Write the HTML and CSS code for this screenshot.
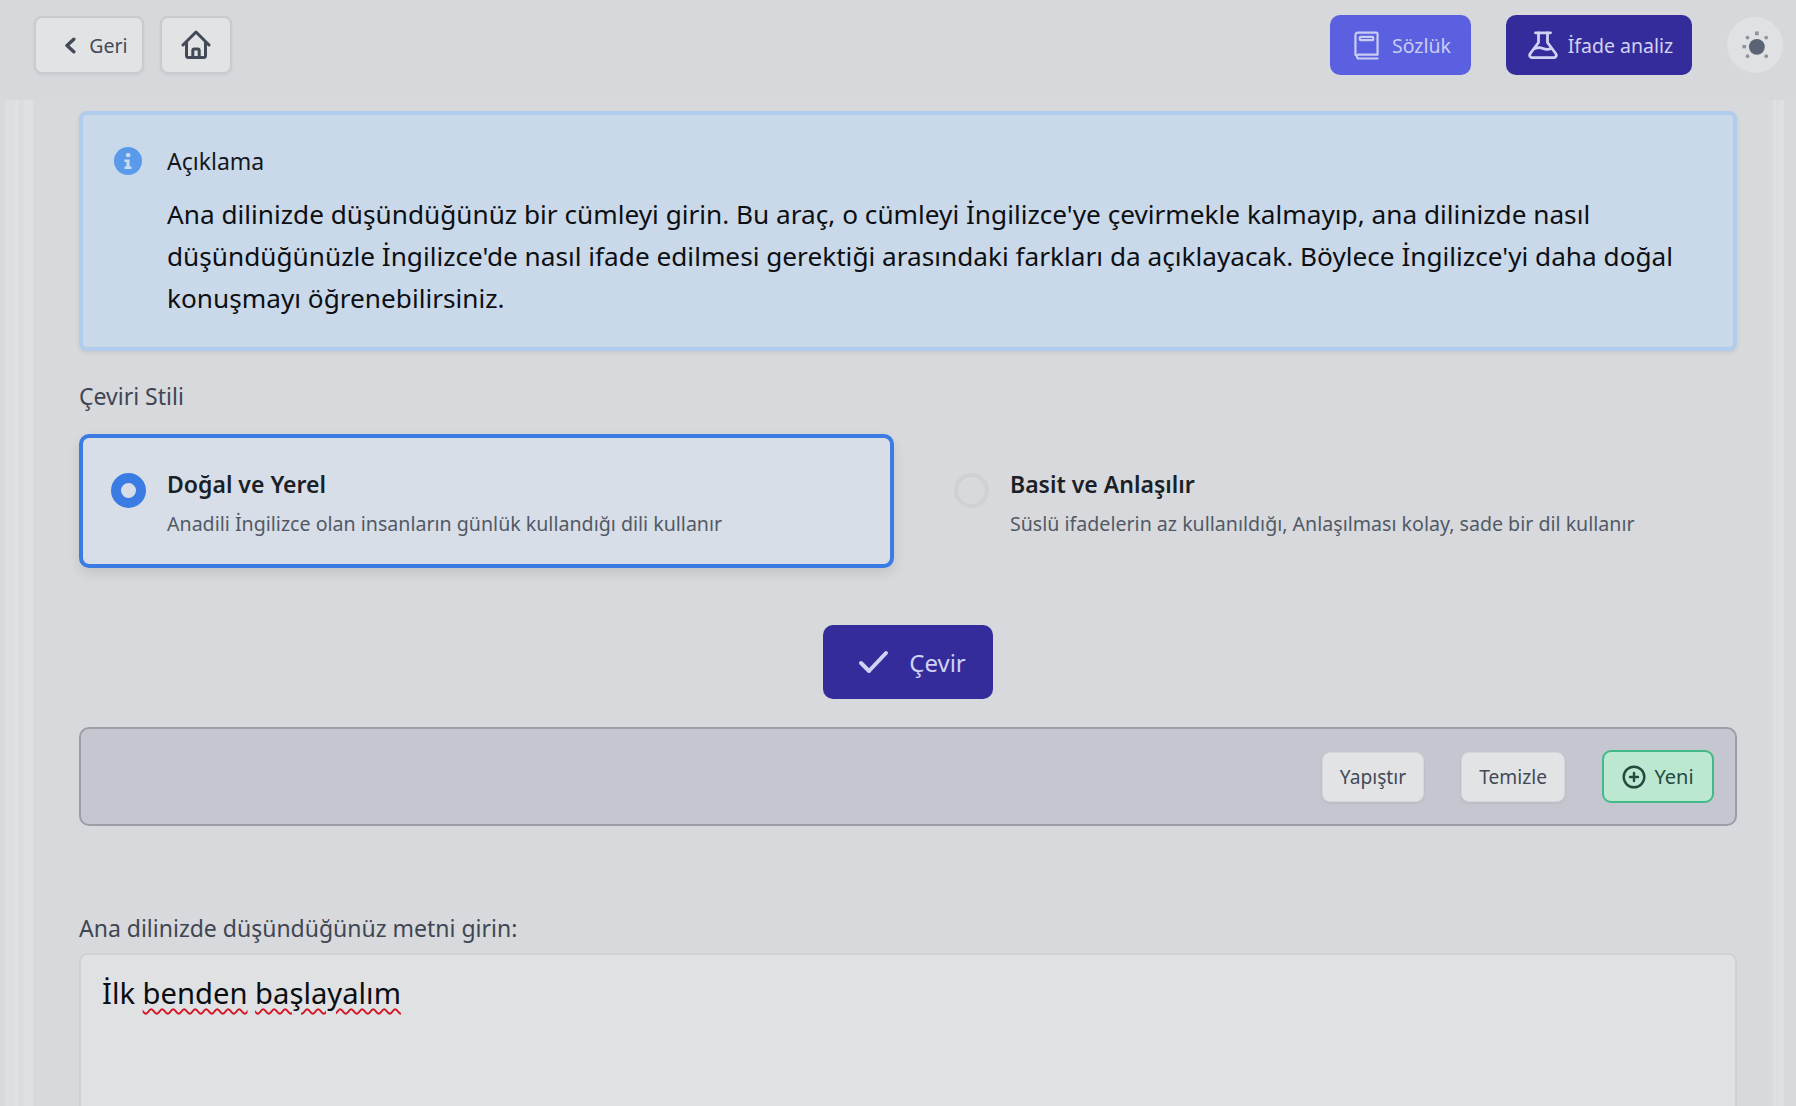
FILE: index.html
```html
<!DOCTYPE html>
<html lang="tr">
<head>
<meta charset="utf-8">
<title>Çeviri</title>
<link rel="stylesheet" href="styles.css">
</head>
<body>
<header class="topbar">
  <div class="group left">
    <button class="btn-light back">
      <svg class="ico-back" viewBox="0 0 12 17" fill="none" stroke="currentColor" stroke-width="3.4" stroke-linecap="round" stroke-linejoin="round"><path d="M9.800 2.200 3 8.500l6.800 6.300"/></svg>
      <span>Geri</span>
    </button>
    <button class="btn-light home">
      <svg class="ico-home" viewBox="0 0 30 30" fill="none" stroke="currentColor" stroke-width="3" stroke-linecap="round" stroke-linejoin="round"><path d="M2 15 15 2l13 13"/><path d="M5.500 12V25.500a2 2 0 0 0 2 2h15a2 2 0 0 0 2-2V12"/><path d="M11.800 27.500v-7a1.500 1.500 0 0 1 1.500-1.500h3.400a1.500 1.500 0 0 1 1.500 1.500v7"/></svg>
    </button>
  </div>
  <div class="group right">
    <button class="btn-solid dict">
      <svg class="ico-book" viewBox="0 0 26 30" fill="none" stroke="currentColor" stroke-width="2.300" stroke-linecap="round" stroke-linejoin="round"><path d="M1.500 25V4A2.500 2.500 0 0 1 4 1.500h19a1.500 1.500 0 0 1 1.500 1.500v21.500H4a2.500 2.500 0 0 0 0 4h20.500"/><rect x="6" y="6" width="14" height="3.500" rx="1"/></svg>
      <span>Sözlük</span>
    </button>
    <button class="btn-solid analyze">
      <svg class="ico-flask" viewBox="0 0 30 28" fill="none" stroke="currentColor" stroke-width="2.800" stroke-linecap="round" stroke-linejoin="round"><path d="M7.500 1.800h15"/><path d="M10.500 2v9.500L2.300 22.500c-1.500 2.200 0 4.200 2.500 4.200h20.400c2.500 0 4-2 2.500-4.200L19.500 11.500V2"/><path d="M7 17.500c3.500-1.500 5.500-1 8 0s5 1.300 8 0"/></svg>
      <span>İfade analiz</span>
    </button>
    <button class="theme" aria-label="Tema">
      <svg class="ico-sun" viewBox="0 0 30 30"><circle class="sun-core" cx="17" cy="17" r="8.500"/><rect class="sun-ray" x="15" y="0.500" width="4" height="4"/><rect class="sun-ray" x="1.500" y="15" width="4" height="3.600"/><circle class="sun-ray" cx="7" cy="7" r="2"/><circle class="sun-ray" cx="27" cy="7" r="2"/><circle class="sun-ray" cx="7" cy="27" r="2"/><circle class="sun-ray" cx="27" cy="27" r="2"/></svg>
    </button>
  </div>
</header>

<main class="content">
  <section class="info">
    <svg class="ico-info" viewBox="0 0 28 28"><circle cx="14" cy="14" r="14" fill="#5a9aea"/><rect x="12" y="6" width="4.400" height="4" rx="1.500" fill="#cbdcee"/><path d="M10.500 12.500h5v7h2v2.500h-7v-2.500h2v-4.500h-2z" fill="#cbdcee"/></svg>
    <div class="info-body">
      <h3 class="info-title">Açıklama</h3>
      <p class="info-text">Ana dilinizde düşündüğünüz bir cümleyi girin. Bu araç, o cümleyi İngilizce'ye çevirmekle kalmayıp, ana dilinizde nasıl düşündüğünüzle İngilizce'de nasıl ifade edilmesi gerektiği arasındaki farkları da açıklayacak. Böylece İngilizce'yi daha doğal konuşmayı öğrenebilirsiniz.</p>
    </div>
  </section>

  <div class="field-label style-label">Çeviri Stili</div>

  <div class="styles">
    <div class="style-card active">
      <span class="radio checked"></span>
      <div>
        <div class="style-name">Doğal ve Yerel</div>
        <div class="style-desc">Anadili İngilizce olan insanların günlük kullandığı dili kullanır</div>
      </div>
    </div>
    <div class="style-card">
      <span class="radio"></span>
      <div>
        <div class="style-name">Basit ve Anlaşılır</div>
        <div class="style-desc">Süslü ifadelerin az kullanıldığı, Anlaşılması kolay, sade bir dil kullanır</div>
      </div>
    </div>
  </div>

  <div class="submit-row">
    <button class="btn-solid translate">
      <svg class="ico-check" viewBox="0 0 30 24" fill="none" stroke="currentColor" stroke-width="4" stroke-linecap="round" stroke-linejoin="round"><path d="M2.500 13l8 8L27.500 3"/></svg>
      <span>Çevir</span>
    </button>
  </div>

  <div class="toolbar">
    <button class="btn-tool">Yapıştır</button>
    <button class="btn-tool">Temizle</button>
    <button class="btn-new">
      <svg class="ico-plus" viewBox="0 0 24 24" fill="none" stroke="currentColor" stroke-width="2.400" stroke-linecap="round"><circle cx="12" cy="12" r="10.300"/><path d="M12 8v8M8 12h8"/></svg>
      <span>Yeni</span>
    </button>
  </div>

  <div class="field-label input-label">Ana dilinizde düşündüğünüz metni girin:</div>
  <div class="input-box"><span>İlk</span> <span class="typo">benden</span> <span class="typo">başlayalım</span></div>
</main>
</body>
</html>
```
FILE: styles.css
```css
* { box-sizing: border-box; }
html, body { margin: 0; height: 100%; }
body {
  width: 1796px;
  height: 1106px;
  overflow: hidden;
  background: #d6d8dc;
  font-family: "Noto Sans", "Open Sans", sans-serif;
  display: flex;
  flex-direction: column;
}
button { font-family: inherit; cursor: pointer; }
h3, p { margin: 0; }

.topbar {
  height: 100px;
  flex: none;
  display: flex;
  justify-content: space-between;
  align-items: flex-start;
  padding: 15px 13px 0 34px;
}
.group { display: flex; align-items: center; gap: 16px; }
.group.left { margin-top: 1px; }
.group.right { gap: 35px; }

.btn-light {
  height: 58px;
  border: 2px solid #cacbd0;
  border-radius: 8px;
  background: #e2e3e5;
  color: #434a57;
  display: flex;
  align-items: center;
  justify-content: center;
  font-size: 19.500px;
  box-shadow: 0 1px 3px rgba(0,0,0,.06);
}
.back { width: 110px; gap: 13px; padding: 0 0 0 14px; }
.home { width: 72px; padding: 0; }
.ico-back { width: 12px; height: 17px; }
.ico-home { width: 30px; height: 30px; }

.btn-solid {
  border: 0;
  border-radius: 10px;
  display: flex;
  align-items: center;
  justify-content: center;
  font-size: 19.500px;
  color: #c9cdf2;
}
.dict { width: 141px; height: 60px; background: #5b60e0; gap: 13px; padding: 0 0 0 4px; }
.analyze { width: 186px; height: 60px; background: #352c9b; gap: 10px; padding: 0 0 0 3px; color: #d0d3f4; }
.ico-book { width: 25px; height: 29px; }
.ico-flask { width: 30px; height: 28px; }

.theme {
  width: 56px;
  height: 56px;
  border: 0;
  border-radius: 50%;
  background: #e0e1e3;
  display: flex;
  align-items: center;
  justify-content: center;
  padding: 0;
}
.ico-sun { width: 28px; height: 28px; }
.sun-core { fill: #5a6475; }
.sun-ray { fill: #8d94a1; }

.content {
  flex: 1;
  min-height: 0;
  padding: 11px 59px 0 79px;
  background:
    linear-gradient(90deg, transparent 0 5px, #dedfe2 5px 15px, #e1e2e4 15px 18px, #dcdde0 18px 24px, #dfe0e2 24px 33px, transparent 33px 36px) left top / 40px 100% no-repeat,
    linear-gradient(90deg, #d8dade 0 3px, #dfe0e2 3px 6px, #dcdde0 6px 9px, #dfe0e2 9px 14px, #d8d9dd 14px 40px) right top / 26px 100% no-repeat,
    #d7d9dd;
}

.info {
  height: 240px;
  border: 4px solid #b0cdee;
  border-radius: 8px;
  background: #c9d9ea;
  box-shadow: 0 2px 5px rgba(0,0,0,.08);
  padding: 32px 24px 0 31px;
  display: flex;
  gap: 25px;
}
.ico-info { width: 28px; height: 28px; flex: none; }
.info-title { font-weight: 400; font-size: 23px; line-height: 28px; color: #14171c; }
.info-text { margin-top: 18px; font-size: 26.200px; line-height: 42px; color: #0d0f12; }

.field-label { font-size: 23px; line-height: 30px; color: #3f4653; }
.style-label { margin-top: 30px; }

.styles { display: grid; grid-template-columns: 815px 1fr; gap: 28px; margin-top: 23px; }
.style-card {
  height: 134px;
  padding: 0 0 0 28px;
  border: 4px solid transparent;
  border-radius: 10px;
  display: flex;
  align-items: center;
  gap: 21px;
}
.style-card.active {
  border-color: #3b7ce4;
  background: #d7dee7;
  box-shadow: 0 5px 12px rgba(0,0,0,.10);
}
.radio {
  width: 35px;
  height: 35px;
  flex: none;
  border: 4px solid #cfd1d4;
  border-radius: 50%;
  background: transparent;
  margin-top: -21px;
}
.radio.checked { border: 10px solid #3b7ce4; background: #d7dee7; }
.style-name { font-size: 23px; font-weight: 600; line-height: 34px; margin-top: 4px; color: #1b1f27; }
.style-desc { font-size: 19.600px; line-height: 30px; margin-top: 8px; color: #525966; }

.submit-row { display: flex; justify-content: center; margin-top: 57px; }
.translate { width: 170px; height: 74px; background: #352c9b; gap: 20px; padding: 0 0 0 8px; font-size: 24px; color: #d0d3f4; }
.ico-check { width: 31px; height: 24px; }

.toolbar {
  height: 99px;
  margin-top: 28px;
  border: 2px solid #9b9ea6;
  border-radius: 10px;
  background: #c4c7d0;
  display: flex;
  align-items: center;
  justify-content: flex-end;
  padding-right: 21px;
  gap: 37px;
}
.btn-tool {
  height: 50px;
  padding: 0 17px;
  border: 1px solid #d6d7da;
  border-radius: 8px;
  background: #e2e3e5;
  font-size: 19.200px;
  color: #434a57;
  box-shadow: 0 1px 3px rgba(0,0,0,.08);
}
.btn-new {
  height: 53px;
  width: 112px;
  border: 2px solid #43b98a;
  border-radius: 9px;
  background: #bce7d1;
  color: #244a40;
  font-size: 20px;
  display: flex;
  align-items: center;
  justify-content: center;
  gap: 8px;
  padding: 0;
}
.ico-plus { width: 24px; height: 24px; }

.input-label { margin-top: 87px; }
.input-box {
  margin-top: 10px;
  height: 200px;
  border: 2px solid #cfd1d5;
  border-radius: 8px;
  background: #e0e1e3;
  padding: 17px 21px;
  font-size: 29.200px;
  line-height: 42px;
  color: #0b0d10;
}
.typo { text-decoration: underline wavy #d41420; text-decoration-thickness: 1.500px; text-underline-offset: 4px; }
```
